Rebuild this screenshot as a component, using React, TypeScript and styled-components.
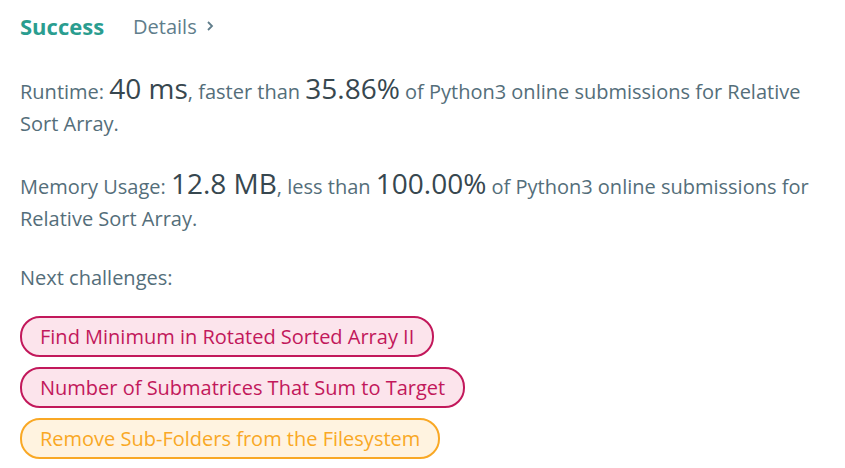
import styled, { createGlobalStyle } from "styled-components";

type Tone = "pink" | "orange";

const GlobalStyle = createGlobalStyle`
  html, body {
    margin: 0;
    padding: 0;
    background: #ffffff;
  }
  body {
    font-family: "Open Sans", "Noto Sans", sans-serif;
  }
`;

const Page = styled.div`
  width: 805px;
  padding: 9px 20px 12px 20px;
  color: #546e7a;
  font-size: 20px;
`;

const Header = styled.div`
  display: flex;
  align-items: center;
  gap: 29px;
  height: 34px;
`;

const Status = styled.span`
  color: #2a9d8f;
  font-weight: 700;
  font-size: 22px;
`;

const DetailsLink = styled.span`
  display: flex;
  align-items: center;
  gap: 8px;
  color: #607d8b;
  font-size: 20px;
`;

const Stat = styled.p`
  margin: 30px 0 0 0;
  line-height: 32px;

  & + & {
    margin-top: 28px;
  }
`;

const Big = styled.span`
  color: #37474f;
  font-size: 28px;
  line-height: 30px;
`;

const NextTitle = styled.p`
  margin: 27px 0 22px 0;
  line-height: 32px;
`;

const TagList = styled.div`
  display: flex;
  flex-direction: column;
  align-items: flex-start;
  gap: 10px;
`;

const Tag = styled.a<{ $tone: Tone }>`
  display: inline-block;
  padding: 4px 18px;
  line-height: 29px;
  border-radius: 20px;
  border: 2px solid ${(p) => (p.$tone === "pink" ? "#c2185b" : "#f9a825")};
  background: ${(p) => (p.$tone === "pink" ? "#fce4ec" : "#fff3e0")};
  color: ${(p) => (p.$tone === "pink" ? "#c2185b" : "#f9a825")};
  text-decoration: none;
`;

const Chevron = () => (
  <svg width="10" height="12" viewBox="0 0 10 12" fill="none">
    <path d="M3 2l4 4-4 4" stroke="#607d8b" strokeWidth="1.8" />
  </svg>
);

const challenges: { title: string; tone: Tone }[] = [
  { title: "Find Minimum in Rotated Sorted Array II", tone: "pink" },
  { title: "Number of Submatrices That Sum to Target", tone: "pink" },
  { title: "Remove Sub-Folders from the Filesystem", tone: "orange" },
];

const App = () => {
  return (
    <>
      <GlobalStyle />
      <Page>
        <Header>
          <Status>Success</Status>
          <DetailsLink>
            Details <Chevron />
          </DetailsLink>
        </Header>
        <Stat>
          Runtime: <Big>40 ms</Big>, faster than <Big>35.86%</Big> of Python3
          online submissions for Relative Sort Array.
        </Stat>
        <Stat>
          Memory Usage: <Big>12.8 MB</Big>, less than <Big>100.00%</Big> of
          Python3 online submissions for Relative Sort Array.
        </Stat>
        <NextTitle>Next challenges:</NextTitle>
        <TagList>
          {challenges.map((c) => (
            <Tag key={c.title} $tone={c.tone}>
              {c.title}
            </Tag>
          ))}
        </TagList>
      </Page>
    </>
  );
};

export default App;
